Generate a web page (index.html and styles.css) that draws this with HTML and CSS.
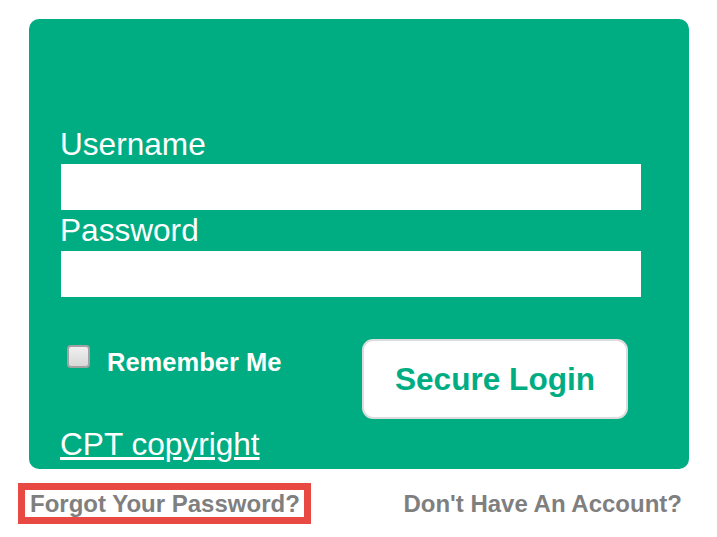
FILE: index.html
```html
<!DOCTYPE html>
<html>
<head>
<meta charset="utf-8">
<link rel="stylesheet" href="styles.css">
</head>
<body>
<div class="page">
  <form class="card">
    <label class="field-label" for="user">Username</label>
    <input class="field-input" id="user" type="text">
    <label class="field-label" for="pass">Password</label>
    <input class="field-input" id="pass" type="password">
    <div class="actions">
      <div class="remember">
        <span class="check"></span>
        <span class="remember-text">Remember Me</span>
      </div>
      <button class="login-btn" type="button">Secure Login</button>
    </div>
    <a class="copyright" href="#">CPT copyright</a>
  </form>
  <div class="footer">
    <a class="footer-link forgot" href="#">Forgot Your Password?</a>
    <a class="footer-link" href="#">Don't Have An Account?</a>
  </div>
</div>
</body>
</html>
```

FILE: styles.css
```css
html, body {
  margin: 0;
  padding: 0;
  background: #ffffff;
}
body {
  font-family: "Liberation Sans", Arial, sans-serif;
}
.page {
  width: 717px;
}
.card {
  margin: 19px 0 0 29px;
  width: 660px;
  box-sizing: border-box;
  padding: 105px 48px 7px 31px;
  background: #00ad83;
  border-radius: 10px;
  display: flex;
  flex-direction: column;
  align-items: flex-start;
}
.field-label {
  display: block;
  color: #ffffff;
  font-size: 31.6px;
  line-height: 36.3px;
  padding-top: 2px;
  margin-bottom: 2px;
}
.field-input {
  display: block;
  width: 580px;
  height: 46px;
  margin: 0 0 0 1px;
  border: none;
  padding: 0;
  background: #ffffff;
  outline: none;
}
.actions {
  display: flex;
  align-items: flex-start;
  width: 100%;
}
.remember {
  flex: 0 0 302px;
  display: flex;
  align-items: flex-start;
  margin-top: 48px;
}
.check {
  width: 23px;
  height: 23px;
  box-sizing: border-box;
  margin-left: 7px;
  border: 2px solid #a3a3a3;
  border-radius: 4px;
  background: linear-gradient(#f0f0f0, #d8d8d8);
}
.remember-text {
  margin-left: 17px;
  margin-top: 3.5px;
  color: #ffffff;
  font-weight: bold;
  font-size: 25.5px;
  line-height: 29.3px;
}
.login-btn {
  margin-top: 42px;
  width: 266px;
  height: 80px;
  box-sizing: border-box;
  background: #ffffff;
  border: 2px solid #dcdcdc;
  border-radius: 11px;
  color: #00ad83;
  font-family: "Liberation Sans", Arial, sans-serif;
  font-weight: bold;
  font-size: 31.6px;
  padding: 2px 0 0 0;
}
.copyright {
  margin-top: 7px;
  color: #ffffff;
  font-size: 31.6px;
  line-height: 36.3px;
  text-decoration: underline;
}
.footer {
  display: flex;
  justify-content: space-between;
  align-items: flex-start;
  margin: 14px 0 0 18px;
  width: 671px;
}
.footer-link {
  color: #7f7f7f;
  font-weight: bold;
  font-size: 24px;
  line-height: 27px;
  text-decoration: none;
  border: 7px solid transparent;
}
.footer-link.forgot {
  border-color: #e84a43;
  padding: 0 4px 0 5px;
}
```
